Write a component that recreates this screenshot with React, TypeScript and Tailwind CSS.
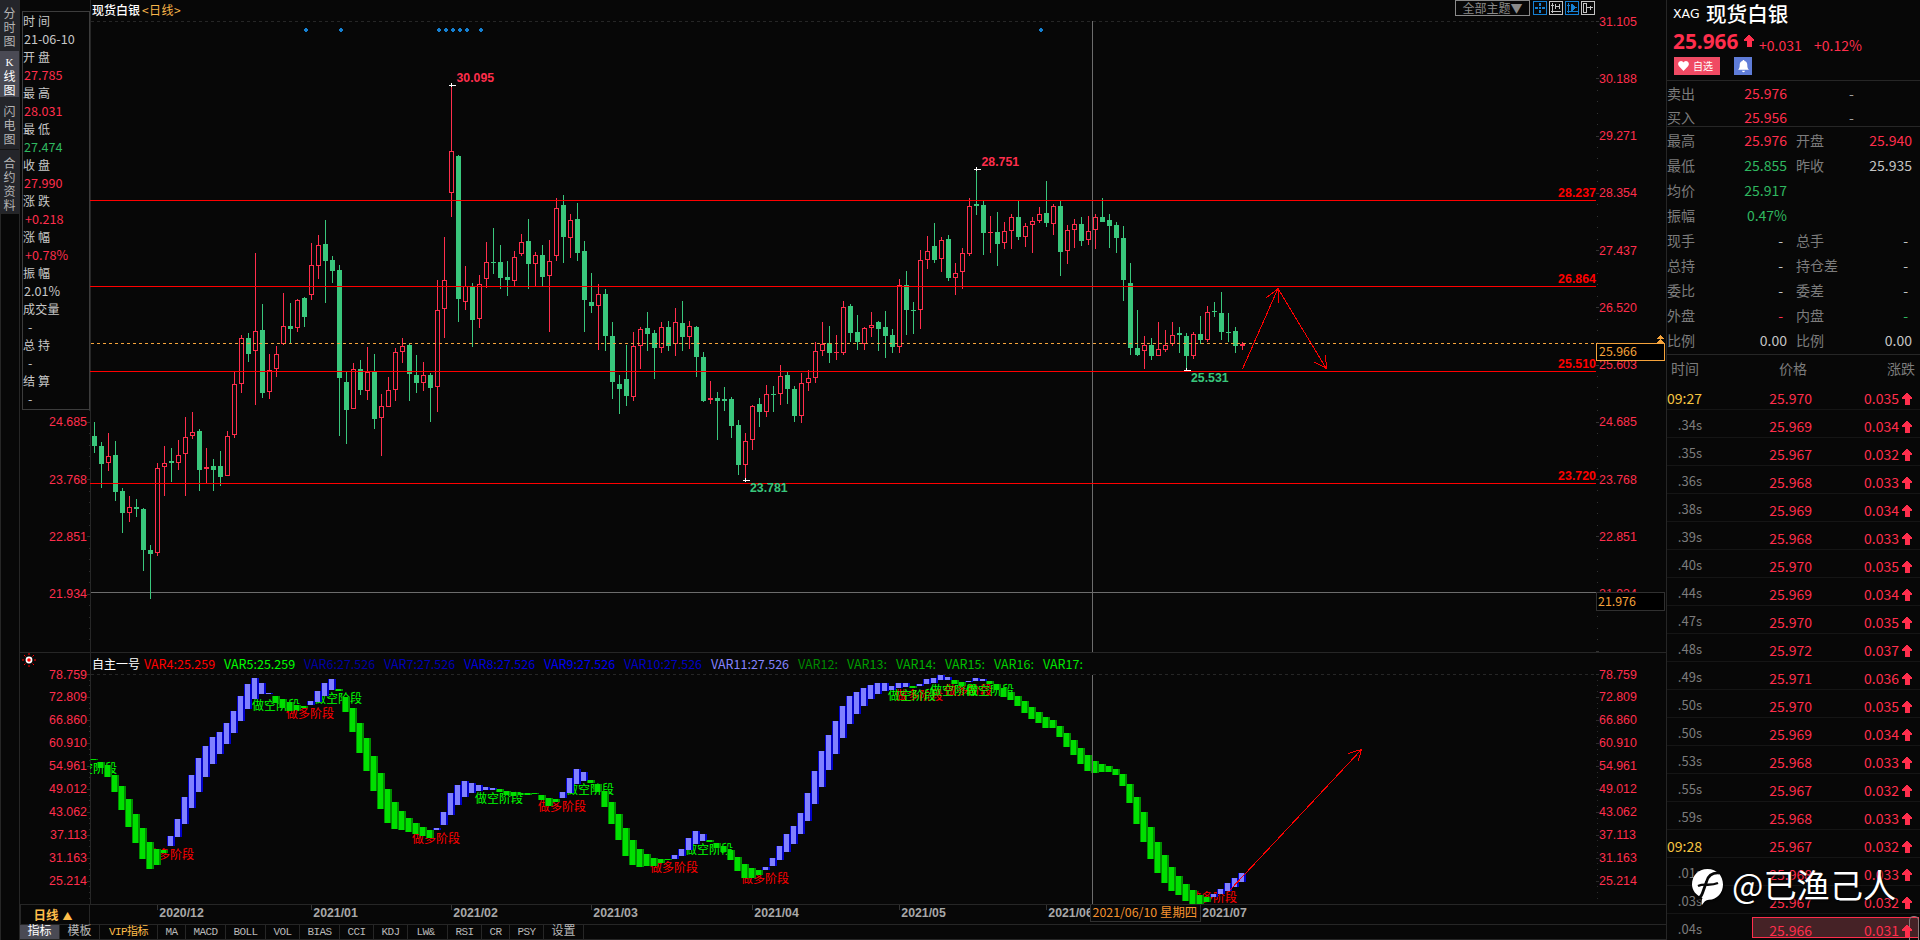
import type { ReactNode } from "react"

type Candle = [up: 0 | 1, high: number, top: number, bottom: number, low: number]
type Bar = [up: 0 | 1, top: number, bottom: number]

const BG = "#070707"
const UP = "#ff2e4c"
const DOWN = "#39c77c"
const LINE = "#262626"
const FIRST_X = 94
const STEP = 7

const candles: Candle[] = [
  [0,422,436,446,453],[0,442,446,464,488],[1,433,456,463,471],[0,441,455,492,501],[0,488,491,513,533],
  [1,496,507,513,522],[0,499,507,509,517],[0,508,509,550,571],[0,545,550,554,599],[1,463,468,553,556],
  [1,446,463,467,496],[0,448,461,463,482],[1,440,455,463,470],[1,417,437,454,496],[1,412,432,436,439],
  [0,429,431,470,491],[1,448,467,469,483],[0,459,466,470,491],[0,451,466,477,486],[1,431,436,476,476],
  [1,372,384,435,438],[1,335,338,384,393],[0,333,338,354,362],[1,253,331,351,405],[0,304,330,393,398],
  [1,354,370,392,399],[1,346,354,369,377],[1,293,326,344,345],[0,303,326,329,343],[1,299,300,328,332],
  [0,297,298,317,327],[1,243,265,295,300],[1,235,245,266,279],[0,220,244,261,303],[0,256,260,271,283],
  [0,265,270,378,436],[0,372,382,410,444],[1,363,369,409,409],[0,360,369,390,395],[1,347,372,391,400],
  [0,354,372,419,429],[1,394,406,418,456],[1,377,390,407,407],[1,348,352,390,401],[1,338,346,352,363],
  [0,344,345,374,401],[0,355,375,383,393],[1,362,375,383,391],[0,373,375,388,422],[1,280,310,387,412],
  [1,237,280,309,338],[1,87,151,193,217],[0,155,156,299,322],[1,266,286,302,310],[0,283,286,320,347],
  [1,275,284,319,328],[1,242,262,279,288],[0,228,262,263,274],[0,245,262,278,289],[0,261,277,280,296],
  [1,251,257,281,286],[1,234,242,254,256],[0,219,241,264,289],[1,252,255,264,286],[0,245,255,277,286],
  [1,240,261,276,332],[1,198,208,256,261],[0,195,205,237,263],[1,214,220,238,258],[0,203,219,253,261],
  [0,241,251,300,332],[0,273,302,306,313],[1,284,294,306,350],[0,289,294,336,351],[0,322,336,382,399],
  [0,375,384,389,414],[0,345,379,396,406],[1,332,346,397,401],[1,327,329,346,369],[0,312,328,334,351],
  [0,330,333,348,379],[1,322,327,348,353],[0,321,327,346,351],[1,308,322,344,356],[0,301,323,337,351],
  [1,321,326,337,349],[0,326,327,357,377],[0,352,357,401,402],[1,381,398,400,404],[0,392,398,401,440],
  [0,387,399,401,411],[0,397,399,426,438],[0,420,425,465,475],[1,433,441,465,480],[1,405,406,440,450],
  [0,398,404,412,427],[1,385,394,412,417],[0,386,394,395,412],[1,365,376,394,405],[0,372,375,389,404],
  [0,386,389,416,422],[1,373,383,416,423],[1,370,378,383,391],[1,342,351,378,383],[1,322,344,351,356],
  [0,326,343,353,363],[1,335,352,353,360],[1,301,307,353,355],[0,304,306,333,342],[0,315,332,342,350],
  [1,327,328,344,350],[1,312,325,328,337],[0,321,322,329,351],[0,311,327,336,358],[0,329,335,347,353],
  [1,279,285,347,353],[0,271,285,310,335],[0,302,310,311,334],[1,250,260,310,329],[1,236,251,260,269],
  [0,223,246,260,263],[1,237,240,259,272],[0,235,239,278,281],[1,263,273,278,295],[1,248,253,272,289],
  [1,198,206,254,256],[0,170,204,206,215],[0,201,205,233,255],[1,216,232,233,253],[0,212,232,244,266],
  [1,222,231,243,249],[1,214,217,231,249],[0,201,217,237,240],[1,223,226,237,247],[1,217,221,225,253],
  [1,207,214,221,223],[0,181,213,223,227],[1,204,206,224,235],[0,201,206,252,276],[1,225,230,251,264],
  [1,219,224,230,248],[0,217,224,241,246],[1,216,231,240,245],[1,214,217,230,249],[0,198,217,222,222],
  [0,214,220,226,248],[0,222,225,238,253],[0,226,238,280,301],[0,263,283,348,355],[0,310,348,355,356],
  [1,336,345,351,369],[0,338,345,356,360],[1,322,349,356,356],[1,330,345,350,352],[1,322,335,344,346],
  [0,327,333,335,353],[0,333,336,356,369],[1,332,334,356,359],[0,316,334,340,344],[1,306,312,340,342],
  [0,302,311,312,317],[0,292,313,332,340],[0,313,332,333,342],[0,327,331,346,353],[1,342,344,346,350],
]

const bars: Bar[] = [
  [0,759,760],[0,762,768],[0,765,777],[0,775,792],[0,786,810],[0,799,827],[0,814,843],[0,828,859],[0,842,869],[0,849,865],
  [0,850,853],[1,836,846],[1,819,837],[1,797,824],[1,775,808],[1,758,792],[1,746,777],[1,737,764],[1,732,754],[1,723,744],
  [1,711,733],[1,696,721],[1,684,709],[1,678,699],[1,683,694],[1,693,694],[0,696,703],[0,699,708],[0,702,711],[0,705,710],
  [0,706,708],[1,701,705],[1,691,702],[1,683,696],[1,679,690],[0,689,691],[0,697,712],[0,708,732],[0,723,753],[0,738,771],
  [0,756,791],[0,773,809],[0,789,823],[0,802,829],[0,811,830],[0,818,832],[0,823,834],[0,827,836],[0,830,838],[1,828,830],
  [1,812,825],[1,793,815],[1,785,805],[1,781,797],[1,783,793],[1,785,791],[1,787,790],[1,788,790],[0,789,792],[0,791,795],
  [0,792,796],[0,793,795],[0,793,795],[0,793,794],[0,795,800],[0,798,806],[0,799,802],[1,792,798],[1,778,793],[1,769,784],
  [1,772,781],[0,780,783],[0,784,792],[0,791,807],[0,802,824],[0,814,840],[0,828,856],[0,840,865],[0,849,867],[0,854,866],
  [0,858,866],[0,859,863],[0,859,860],[1,855,859],[1,849,856],[1,838,850],[1,831,844],[1,834,841],[0,840,842],[0,843,848],
  [0,846,852],[0,850,860],[0,857,871],[0,864,878],[0,868,878],[0,870,875],[1,867,870],[1,858,866],[1,846,860],[1,834,852],
  [1,826,844],[1,813,834],[1,793,821],[1,771,804],[1,751,787],[1,735,770],[1,721,754],[1,706,738],[1,696,724],[1,692,714],
  [1,688,706],[1,685,699],[1,683,694],[1,683,691],[1,686,690],[1,683,688],[1,683,687],[0,686,688],[1,684,686],[1,679,684],
  [1,678,683],[1,675,680],[1,677,680],[0,680,684],[0,682,686],[1,681,682],[1,678,681],[1,679,681],[0,681,684],[0,684,690],
  [0,688,697],[0,692,700],[0,696,706],[0,701,713],[0,707,719],[0,712,723],[0,717,728],[0,720,728],[0,726,737],[0,733,747],
  [0,740,755],[0,748,764],[0,755,771],[0,761,773],[0,764,772],[0,766,772],[0,769,775],[0,774,786],[0,784,803],[0,797,824],
  [0,812,842],[0,827,859],[0,842,873],[0,855,883],[0,867,891],[0,876,895],[0,884,901],[0,890,904],[0,895,904],[0,897,902],
  [1,894,897],[1,889,894],[1,883,891],[1,878,887],[1,873,882],
]

// buy / sell stage captions under the indicator curve
const stages: [text: string, x: number, y: number][] = [
  ["做空阶段", 69, 773], ["做多阶段", 146, 859], ["做空阶段", 252, 710], ["做多阶段", 286, 718],
  ["做空阶段", 314, 703], ["做多阶段", 412, 843], ["做空阶段", 475, 803], ["做多阶段", 538, 811],
  ["做空阶段", 566, 794], ["做多阶段", 650, 872], ["做空阶段", 685, 854], ["做多阶段", 741, 883],
  ["做多阶段", 895, 700], ["做空阶段", 888, 700], ["做多阶段", 944, 695], ["做空阶段", 930, 695],
  ["做空阶段", 966, 695], ["做多阶段", 1189, 902],
]

const priceLabels = ["31.105", "30.188", "29.271", "28.354", "27.437", "26.520", "25.603", "24.685", "23.768", "22.851", "21.934"]
const oscLabels = ["78.759", "72.809", "66.860", "60.910", "54.961", "49.012", "43.062", "37.113", "31.163", "25.214"]
const priceY = (i: number) => 21 + i * 57.25
const oscY = (i: number) => 674 + i * 22.97

const levels: [string, number][] = [["28.237", 200], ["26.864", 286], ["25.510", 371], ["23.720", 483]]
const signalDots = [306, 341, 439, 446, 453, 460, 467, 481, 1041]
const months: [string, number][] = [
  ["2020/12", 157], ["2021/01", 311], ["2021/02", 451], ["2021/03", 591],
  ["2021/04", 752], ["2021/05", 899], ["2021/06", 1046], ["2021/07", 1200],
]

const info: [string, string, string][] = [
  ["时 间", "21-06-10", "text-[#c8c8c8]"], ["开 盘", "27.785", "text-[#ff2e4c]"], ["最 高", "28.031", "text-[#ff2e4c]"],
  ["最 低", "27.474", "text-[#2fb860]"], ["收 盘", "27.990", "text-[#ff2e4c]"], ["涨 跌", "+0.218", "text-[#ff2e4c]"],
  ["涨 幅", "+0.78%", "text-[#ff2e4c]"], ["振 幅", "2.01%", "text-[#c8c8c8]"], ["成交量", "-", "text-[#c8c8c8]"],
  ["总 持", "-", "text-[#c8c8c8]"], ["结 算", "-", "text-[#c8c8c8]"],
]

const vars: [string, string][] = [
  ["VAR4:25.259", "w-[80px] text-[#ff0000]"], ["VAR5:25.259", "w-[80px] text-[#00ff00]"],
  ["VAR6:27.526", "w-[80px] text-[#0000a4]"], ["VAR7:27.526", "w-[80px] text-[#0000b8]"],
  ["VAR8:27.526", "w-[80px] text-[#0000dc]"], ["VAR9:27.526", "w-[80px] text-[#0000f4]"],
  ["VAR10:27.526", "w-[87px] text-[#0000c4]"], ["VAR11:27.526", "w-[87px] text-[#8484ff]"],
  ["VAR12:", "w-[49px] text-[#008800]"], ["VAR13:", "w-[49px] text-[#009c00]"], ["VAR14:", "w-[49px] text-[#00b000]"],
  ["VAR15:", "w-[49px] text-[#00c000]"], ["VAR16:", "w-[49px] text-[#00d400]"], ["VAR17:", "w-[49px] text-[#00e800]"],
]

const tabs: [string, string][] = [
  ["指标", "w-10 bg-[#4a4a54] text-white"], ["模板", "w-10 text-[#b8b8b8]"], ["VIP指标", "w-[58px] text-[#ffbe4a]"],
  ["MA", "w-7 text-[#b8b8b8]"], ["MACD", "w-10 text-[#b8b8b8]"], ["BOLL", "w-10 text-[#b8b8b8]"], ["VOL", "w-[34px] text-[#b8b8b8]"],
  ["BIAS", "w-10 text-[#b8b8b8]"], ["CCI", "w-[34px] text-[#b8b8b8]"], ["KDJ", "w-[34px] text-[#b8b8b8]"], ["LW&", "w-10 pr-1 text-[#b8b8b8]"],
  ["RSI", "w-[34px] text-[#b8b8b8]"], ["CR", "w-7 text-[#b8b8b8]"], ["PSY", "w-[34px] text-[#b8b8b8]"], ["设置", "w-10 text-[#b8b8b8]"],
]

const red = "text-[#ff2e4c]"
const green = "text-[#2fb860]"
const gray = "text-[#c4c4c4]"
const quotes: [string, string, string, string, string, string][] = [
  ["最高", "25.976", red, "开盘", "25.940", red],
  ["最低", "25.855", green, "昨收", "25.935", gray],
  ["均价", "25.917", green, "", "", gray],
  ["振幅", "0.47%", green, "", "", gray],
  ["现手", "-", gray, "总手", "-", gray],
  ["总持", "-", gray, "持仓差", "-", gray],
  ["委比", "-", gray, "委差", "-", gray],
  ["外盘", "-", red, "内盘", "-", green],
  ["比例", "0.00", gray, "比例", "0.00", gray],
]

const ticks: [string, string, string][] = [
  ["09:27", "25.970", "0.035"], [".34s", "25.969", "0.034"], [".35s", "25.967", "0.032"], [".36s", "25.968", "0.033"],
  [".38s", "25.969", "0.034"], [".39s", "25.968", "0.033"], [".40s", "25.970", "0.035"], [".44s", "25.969", "0.034"],
  [".47s", "25.970", "0.035"], [".48s", "25.972", "0.037"], [".49s", "25.971", "0.036"], [".50s", "25.970", "0.035"],
  [".50s", "25.969", "0.034"], [".53s", "25.968", "0.033"], [".55s", "25.967", "0.032"], [".59s", "25.968", "0.033"],
  ["09:28", "25.967", "0.032"], [".01s", "25.968", "0.033"], [".03s", "25.967", "0.032"], [".04s", "25.966", "0.031"],
]

function Arrow({ className }: { className?: string }) {
  return (
    <svg width="10" height="12" viewBox="0 0 10 12" className={`shrink-0 ${className}`} fill={UP} shapeRendering="crispEdges">
      <path d="M4 0 H6 L10 4.5 V6 H7.5 V12 H2.5 V6 H0 V4.5 Z" />
    </svg>
  )
}

function AxisText({ x, y, anchor, children }: { x: number; y: number; anchor?: "end"; children: ReactNode }) {
  return (
    <text x={x} y={y + 4.5} textAnchor={anchor} fontSize="12.4" fill={UP} className="font-['Liberation_Sans',sans-serif]">
      {children}
    </text>
  )
}

function Rail() {
  const cell = "flex flex-col items-center text-[12px] leading-[14px] text-[#b4b4b4]"
  return (
    <aside className="w-5 shrink-0 border-r border-[#262626] font-['Noto_Sans_CJK_SC',sans-serif]">
      <div className="bg-[#24252a] h-[213px]">
        <div className={`${cell} h-[51px] pt-[6px]`}>{[..."分时图"].map(c => <span key={c}>{c}</span>)}</div>
        <div className="flex flex-col items-center text-[12px] leading-[14px] h-[46px] pt-[4px] bg-[#4a4a54] text-white">
          <span className="font-['Liberation_Serif',serif] text-[11px]">K</span>
          {[..."线图"].map(c => <span key={c}>{c}</span>)}
        </div>
        <div className={`${cell} h-[53px] pt-[7px] border-b border-[#141414]`}>{[..."闪电图"].map(c => <span key={c}>{c}</span>)}</div>
        <div className={`${cell} h-[63px] pt-[6px]`}>{[..."合约资料"].map(c => <span key={c}>{c}</span>)}</div>
      </div>
      <div className="h-[727px] border-l border-t border-[#262626]"></div>
    </aside>
  )
}

function InfoBox() {
  return (
    <div className="mt-[11px] ml-[2px] w-[68px] h-[399px] border border-[#3c3c3c] font-['Noto_Sans_CJK_SC',sans-serif] text-[12px] leading-[18px]">
      {info.map(([label, value, color]) => (
        <div key={label} className="h-9">
          <div className="h-[18px] text-[#c8c8c8] whitespace-pre tracking-[0.2px]">{label}</div>
          <div className={`h-[18px] text-[12.6px] ${value==="-" ? "pl-[5px]" : value[0]==="+" ? "pl-[2px]" : "pl-[1px]"} ${color}`}>{value}</div>
        </div>
      ))}
    </div>
  )
}

function PricePlot() {
  return (
    <svg width="1576" height="652" viewBox="90 0 1576 652" className="block shrink-0" shapeRendering="crispEdges">
      <line x1="91" x2="1594" y1="21.5" y2="21.5" stroke="#262626" strokeDasharray="3 3" />
      <rect x="90" y="0" width="1" height="652" fill={LINE} />
      {signalDots.map(x => (
        <g key={x} fill="#1580d2">
          <rect x={x-2} y="29" width="4" height="2" />
          <rect x={x-1} y="28" width="2" height="4" />
        </g>
      ))}
      <rect x="1092" y="21" width="1" height="631" fill="#6c6c6c" />
      <rect x="91" y="592" width="1505" height="1" fill="#6c6c6c" />
      {candles.map(([up, h, t, b, l], i) => {
        const x = FIRST_X + i * STEP
        return (
          <g key={i} fill={up ? UP : DOWN}>
            <rect x={x} y={h} width="1" height={l-h} />
            <rect x={x-2} y={t} width="5" height={b-t} />
            {up===1 && b-t>2 && <rect x={x-1} y={t+1} width="3" height={b-t-2} fill={BG} />}
          </g>
        )
      })}
      <line x1="91" x2="1596" y1="343.5" y2="343.5" stroke="#f5a33b" strokeDasharray="3 3" />
      {levels.map(([label, y]) => (
        <g key={label}>
          <rect x="90" y={y} width="1506" height="1" fill="#ff0000" />
          <text x="1596" y={y-3} textAnchor="end" fontSize="12.4" fill="#ff0000" className="font-['Liberation_Sans',sans-serif] font-bold">{label}</text>
        </g>
      ))}
      {/* swing highs and lows */}
      <g fill="#ffffff">
        <rect x="449" y="85" width="7" height="1" /><rect x="451" y="83" width="1" height="4" />
        <rect x="974" y="169" width="7" height="1" /><rect x="976" y="167" width="1" height="4" />
        <rect x="743" y="480" width="7" height="1" /><rect x="745" y="478" width="1" height="4" />
        <rect x="1184" y="370" width="7" height="1" /><rect x="1186" y="368" width="1" height="3" />
      </g>
      <g fontSize="12.3" className="font-['Liberation_Sans',sans-serif] font-bold">
        <text x="456.5" y="82" fill={UP}>30.095</text>
        <text x="981.5" y="166" fill={UP}>28.751</text>
        <text x="750" y="492" fill={DOWN}>23.781</text>
        <text x="1191" y="382" fill={DOWN}>25.531</text>
      </g>
      <path d="M1242.5 369 L1278 288.5 L1326.5 369 M1266 298 L1278 289 L1278.5 303 M1314 362 L1326.5 368.5 L1325.5 355" fill="none" stroke="#ff0000" />
      {Array.from({ length: 56 }, (_, i) => (
        <rect key={i} x={i%5===0 ? 1596 : 1597} y={Math.round(21+i*11.45)} width={i%5===0 ? 3 : 1} height="1" fill="#333333" />
      ))}
      {priceLabels.map((p, i) => <AxisText key={p} x={1599} y={priceY(i)}>{p}</AxisText>)}
      <path d="M1660 335 L1664 339 H1656 Z M1660 339 L1664 343 H1656 Z" fill="#f5a33b" />
      <rect x="1596.5" y="343.5" width="68" height="17" fill="#000000" stroke="#f5a33b" />
      <rect x="1596.5" y="592.5" width="68" height="18" fill="#000000" stroke="#303030" />
      <g fontSize="12.4" fill="#f5a33b" className="font-['Noto_Sans_CJK_SC',sans-serif]">
        <text x="1599" y="356">25.966</text>
        <text x="1598" y="605.5">21.976</text>
      </g>
    </svg>
  )
}

function OscillatorPlot() {
  return (
    <svg width="1576" height="230" viewBox="90 674 1576 230" className="block shrink-0 overflow-visible" shapeRendering="crispEdges">
      <defs><clipPath id="plot"><rect x="90" y="653" width="1506" height="251" /></clipPath></defs>
      <rect x="90" y="653" width="1" height="251" fill={LINE} />
      <line x1="91" x2="1594" y1="674.5" y2="674.5" stroke="#262626" strokeDasharray="3 3" />
      <g clipPath="url(#plot)" fontSize="12" className="font-['Noto_Sans_CJK_SC',sans-serif]">
        {stages.map(([text, x, y], i) => (
          <text key={i} x={x} y={y} fill={text==="做空阶段" ? "#00ff00" : "#ff0000"}>{text}</text>
        ))}
      </g>
      {bars.map(([up, t, b], i) => {
        const x = FIRST_X + i * STEP - 4
        return (
          <g key={i}>
            <rect x={x} y={t} width="8" height={b-t} fill={up ? "#0000c8" : "#008c00"} />
            <rect x={x+1} y={t} width="5" height={b-t} fill={up ? "#8080ff" : "#00e000"} />
          </g>
        )
      })}
      <rect x="1092" y="675" width="1" height="229" fill="#6c6c6c" />
      <path d="M1230 890 L1361.5 749.5 M1348 753.5 L1361.5 749.5 L1358 761.5" fill="none" stroke="#ff0000" />
      {Array.from({ length: 40 }, (_, i) => (
        <rect key={i} x={i%4===0 ? 1596 : 1597} y={Math.round(674+i*5.74)} width={i%4===0 ? 3 : 1} height="1" fill="#2c2c2c" />
      ))}
      {oscLabels.map((p, i) => <AxisText key={p} x={1599} y={oscY(i)}>{p}</AxisText>)}
    </svg>
  )
}

function Toolbar() {
  return (
    <div className="absolute left-[1435px] top-0 flex font-['Noto_Sans_CJK_SC',sans-serif]">
      <div className="w-[75px] h-4 border border-[#8a8a8a] text-[12px] leading-[14px] text-[#8a8a8a] text-center whitespace-nowrap">全部主题▼</div>
      <svg width="62" height="14" viewBox="0 0 62 14" className="ml-[3px] mt-px" fill="none" shapeRendering="crispEdges">
        <g stroke="#1580d2">
          <rect x="0.5" y="0.5" width="13" height="13" />
          <path d="M2 7 H5 M6 7 H8 M9 7 H12 M7 2 V5 M7 9 V12" strokeWidth="2" />
          <rect x="32.5" y="0.5" width="13" height="13" />
          <path d="M35.5 2 V12 M33.5 10.5 H45 M34 4.5 H37" />
          <path d="M38 3 L43 6.5 L38 10 Z" fill="#1580d2" />
        </g>
        <g stroke="#c4c4c4">
          <rect x="16.5" y="0.5" width="13" height="13" />
          <path d="M19.5 2 V12 M18 10.5 H28 M18 4.5 H21 M22.5 3 V8 M26.5 3 V8 M22 5.5 H27" />
          <rect x="48.5" y="0.5" width="13" height="13" />
          <path d="M50.5 2.5 H53.5 V11.5 H50.5 Z M54 6.5 H60 M57.5 4.5 V9" />
        </g>
      </svg>
    </div>
  )
}

function ChartArea() {
  return (
    <main className="w-[1646px] shrink-0 flex flex-col">
      <section className="relative flex h-[652px]">
        <div className="w-[70px] shrink-0">
          <InfoBox />
          <svg width="70" height="242" viewBox="20 410 70 242" className="block" shapeRendering="crispEdges">
            {priceLabels.slice(7).map((p, i) => <AxisText key={p} x={87} y={priceY(i+7)} anchor="end">{p}</AxisText>)}
            {Array.from({ length: 21 }, (_, i) => (
              <rect key={i} x={i%5===1 ? 87 : 89} y={Math.round(410.4+i*11.45)} width={i%5===1 ? 3 : 1} height="1" fill="#2c2c2c" />
            ))}
          </svg>
        </div>
        <PricePlot />
        <div className="absolute left-[72px] top-px flex items-center h-[18px] font-['Noto_Sans_CJK_SC',sans-serif] text-[12px] leading-[18px]">
          <span className="text-white font-medium">现货白银</span>
          <span className="text-[#f9b64a] ml-[2px] tracking-[0.4px]">&lt;日线&gt;</span>
        </div>
        <Toolbar />
      </section>

      <section className="flex h-[252px] border-t border-[#262626]">
        <svg width="70" height="251" viewBox="20 653 70 251" className="block shrink-0">
          <path d="M29 653 V655 M29 665 V667 M22 660 H24 M34 660 H36 M24 655 L25.5 656.5 M34 655 L32.5 656.5 M24 665 L25.5 663.5 M34 665 L32.5 663.5" stroke="#ff0000" />
          <circle cx="29" cy="660" r="3.4" fill="#ffffff" />
          <circle cx="29" cy="660" r="1.8" fill="#ff0000" />
          {oscLabels.map((p, i) => <AxisText key={p} x={87} y={oscY(i)} anchor="end">{p}</AxisText>)}
          {Array.from({ length: 40 }, (_, i) => (
            <rect key={i} x={i%4===0 ? 87 : 89} y={Math.round(674+i*5.74)} width={i%4===0 ? 3 : 1} height="1" fill="#2c2c2c" />
          ))}
        </svg>
        <div className="flex flex-col">
          <div className="flex items-center h-[21px] pl-[2px] text-[12px] leading-5 font-['Noto_Sans_CJK_SC',sans-serif]">
            <span className="w-[52px] text-white">自主一号</span>
            {vars.map(([label, cls]) => <span key={label} className={`whitespace-nowrap text-[12.5px] ${cls}`}>{label}</span>)}
          </div>
          <OscillatorPlot />
        </div>
      </section>

      <section className="flex h-5 border-t border-[#262626]">
        <div className="w-[70px] h-[19px] border-x border-[#262626] flex items-center justify-center gap-1 pr-4 pl-3 pt-px font-['Noto_Sans_CJK_SC',sans-serif] text-[12.5px] font-bold text-[#ffbe4a] whitespace-nowrap">
          日线 <span className="text-[10px]">▲</span>
        </div>
        <svg width="1576" height="19" viewBox="90 905 1576 19" className="block" shapeRendering="crispEdges">
          {months.map(([m, x]) => (
            <g key={m}>
              <rect x={x} y="905" width="1" height="5" fill="#333333" />
              <text x={x+2.3} y="917" fontSize="12.3" fill="#a8a8a8" className="font-['Liberation_Sans',sans-serif] font-bold">{m}</text>
            </g>
          ))}
          <rect x="1090.5" y="904.5" width="110" height="17" fill={BG} stroke="#303030" />
          <text x="1092.5" y="917" fontSize="12.4" fill="#f5922f" className="font-['Noto_Sans_CJK_SC',sans-serif]">2021/06/10 星期四</text>
        </svg>
      </section>

      <nav className="flex h-4 border-y border-[#262626] font-['Liberation_Mono','Noto_Sans_CJK_SC',monospace] text-[11px] leading-[15px]">
        {tabs.map(([label, cls]) => (
          <button key={label} className={`h-[14px] border-r border-[#262626] text-center whitespace-nowrap ${/[A-Z]/.test(label) ? "tracking-[-0.6px]" : "text-[12px]"} ${cls}`}>
            {label}
          </button>
        ))}
      </nav>
    </main>
  )
}

function QuotePanel() {
  return (
    <aside className="relative w-[254px] h-[940px] shrink-0 border-l border-[#262626] font-['Noto_Sans_CJK_SC',sans-serif] text-[14px] overflow-hidden">
      <header className="h-[81px] border-b border-[#262626]">
        <div className="flex items-center h-7 pl-[6px]">
          <span className="font-['DejaVu_Sans',sans-serif] text-[12.5px] text-white w-[33px]">XAG</span>
          <span className="text-[20.6px] leading-[26px] text-white font-medium -mt-[2px]">现货白银</span>
        </div>
        <div className="flex h-7 pl-[6px] text-[#ff2e4c]">
          <span className="font-['Open_Sans',sans-serif] font-bold text-[20.8px] leading-[26px] w-[71px]">25.966</span>
          <Arrow className="mt-[7px]" />
          <span className="ml-[5px] mt-[3px] leading-7 w-[55px]">+0.031</span>
          <span className="mt-[3px] leading-7">+0.12%</span>
        </div>
        <div className="flex pl-[7px] mt-px">
          <button className="flex items-center w-[46px] h-[18px] bg-[#f04a63] text-white text-[10px] pl-1">
            <svg width="11" height="10" viewBox="0 0 11 10" fill="#ffffff"><path d="M5.5 10 L1 5.3 C-1.2 2.5 1.2 0 3.1 0 C4.4 0 5.1 0.8 5.5 1.5 C5.9 0.8 6.6 0 7.9 0 C9.8 0 12.2 2.5 10 5.3 Z" /></svg>
            <span className="ml-[4px] leading-[18px]">自选</span>
          </button>
          <button className="ml-[14px] w-[18px] h-[18px] bg-[#5f7cd8] flex items-center justify-center">
            <svg width="11" height="13" viewBox="0 0 11 13" fill="#ffffff"><path d="M5.5 0 C6.2 0 6.5 0.5 6.5 1 C8.6 1.5 9.3 3.2 9.3 5 C9.3 7.5 9.8 8.6 11 9.8 H0 C1.2 8.6 1.7 7.5 1.7 5 C1.7 3.2 2.4 1.5 4.5 1 C4.5 0.5 4.8 0 5.5 0 Z M4 10.8 H7 C7 12.6 4 12.6 4 10.8 Z" /></svg>
          </button>
        </div>
      </header>

      <div className="h-[46px] border-b border-[#262626]">
        {[["卖出", "25.976"], ["买入", "25.956"]].map(([label, v]) => (
          <div key={label} className="h-[25px] first:h-[23px] flex items-center leading-[20px]">
            <span className="text-[#7c7c7c] w-10">{label}</span>
            <span className="text-[#ff2e4c] w-[80px] text-right">{v}</span>
            <span className="text-[#a0a0a0] ml-[62px]">-</span>
          </div>
        ))}
      </div>

      <div className="h-[228px] pt-px border-b border-[#262626]">
        {quotes.map(([a, av, ac, b, bv, bc], i) => (
          <div key={i} className="flex items-center h-[25px] leading-[25px]">
            <span className="text-[#7c7c7c] w-10">{a}</span>
            <span className={`w-20 text-right ${av==="-" ? "pr-[4px]" : ""} ${ac}`}>{av}</span>
            <span className="text-[#7c7c7c] w-[60px] ml-[9px]">{b}</span>
            <span className={`w-[56px] text-right ${bv==="-" ? "pr-[4px]" : ""} ${bc}`}>{bv}</span>
          </div>
        ))}
      </div>

      <div className="flex justify-between h-[27px] pl-1 pr-[5px] text-[#7c7c7c] leading-[27px]">
        <span>时间</span>
        <span>价格</span>
        <span>涨跌</span>
      </div>
      {ticks.map(([time, price, diff], i) => (
        <div key={i} className="relative flex h-7 border-b border-[#151515] leading-7 pt-[2px]">
          {i===ticks.length-1 && (
            <>
              <div className="absolute left-[85px] top-[3px] w-[167px] h-[21px] bg-[#452226] border border-[#ff2e4c]"></div>
              <div className="absolute left-[242px] top-[2px] w-[10px] h-[28px] border border-[#8a7a7a] rounded-t-[4px]"></div>
            </>
          )}
          <span className={`relative w-[35px] text-right ${time.startsWith(".") ? "text-[13px] -top-px text-[#7c7c7c]" : "text-[#f5c542] whitespace-nowrap"}`}>{time}</span>
          <span className="relative w-[110px] text-right text-[#ff2e4c]">{price}</span>
          <span className="relative w-[87px] text-right text-[#ff2e4c]">{diff}</span>
          <Arrow className="relative ml-[3px] mt-[9px]" />
        </div>
      ))}

      {/* author signature */}
      <div className="absolute left-[25px] top-[863px] flex items-center text-white whitespace-nowrap">
        <svg width="31" height="36" viewBox="0 0 31 36" className="mt-[5px] drop-shadow-[1px_1px_1px_rgba(0,0,0,0.8)]">
          <path d="M15.5 0 C25 0 31 7 31 15.5 C31 24 25 30.5 17 30.8 C13.5 31 12 33 10 36 C9.4 33.5 9.6 31 10.5 29 C4 26.5 0 21 0 15.5 C0 7 6 0 15.5 0 Z" fill="#ffffff" />
          <path d="M27 4 C20 3.5 16 7 14.4 13 L10.5 24 C9.5 27 8 29 5 30" stroke={BG} strokeWidth="2.8" fill="none" />
          <path d="M6 17 C12 14 18 17.5 26 14" stroke={BG} strokeWidth="2.4" fill="none" />
        </svg>
        <span className="ml-[9px] text-[33.2px] leading-[42px] [text-shadow:1px_1px_2px_#000]">@已渔己人</span>
      </div>
    </aside>
  )
}

export default function App() {
  return (
    <div className="w-[1920px] h-[940px] bg-[#070707] flex overflow-hidden">
      <Rail />
      <ChartArea />
      <QuotePanel />
    </div>
  )
}
